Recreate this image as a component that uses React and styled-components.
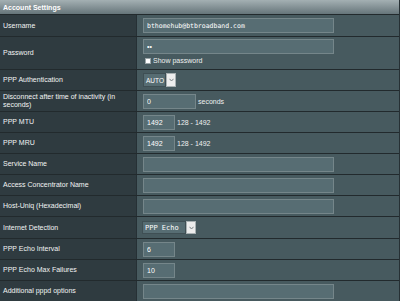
import React from 'react';
import styled, { createGlobalStyle } from 'styled-components';

const Global = createGlobalStyle`
  html, body { margin: 0; padding: 0; background: #475a5f; }
  body {
    width: 400px; height: 301px; overflow: hidden;
    font-family: "Liberation Sans", Arial, sans-serif;
  }
`;

const Table = styled.div`
  width: 399px;
  border-right: 1px solid #263034;
  background: #475a5f;
`;

const Header = styled.div`
  height: 14px;
  box-sizing: border-box;
  padding-left: 3px;
  display: flex;
  align-items: center;
  background: linear-gradient(#a4b0b3, #66757a);
  color: #fff;
  font-weight: bold;
  font-size: 7px;
`;

const Row = styled.div`
  display: grid;
  grid-template-columns: 137px 1fr;
  height: ${p => p.$h}px;
  box-sizing: border-box;
  border-top: 1px solid #222a2d;
`;

const Label = styled.div`
  background: #2f3b40;
  color: #f2f4f4;
  font-size: 7px;
  line-height: 8px;
  display: flex;
  align-items: center;
  padding: 0 12px 0 3px;
  border-right: 1px solid #263035;
`;

const Cell = styled.div`
  display: flex;
  flex-direction: ${p => (p.$stack ? 'column' : 'row')};
  align-items: ${p => (p.$stack ? 'flex-start' : 'center')};
  padding: ${p => (p.$stack ? '2px 0 0 6px' : '0 0 0 6px')};
  gap: ${p => (p.$stack ? '3px' : '2px')};
`;

const TextInput = styled.input`
  box-sizing: border-box;
  width: ${p => p.$w}px;
  height: 15px;
  margin: 0;
  padding: 0 0 0 3px;
  background: #576d73;
  border: 1px solid #75868a;
  color: #fff;
  outline: none;
  font-family: ${p => (p.$mono ? '"DejaVu Sans Mono", monospace' : '"Liberation Sans", Arial, sans-serif')};
  font-size: ${p => (p.$mono ? '6.5px' : '7px')};
`;

const Hint = styled.span`
  color: #eef0f0;
  font-size: 7px;
`;

const CheckLine = styled.label`
  display: flex;
  align-items: center;
  gap: 2px;
  color: #eef0f0;
  font-size: 7px;
  padding-left: 2px;
`;

const Check = styled.input`
  appearance: none;
  margin: 0;
  width: 6px;
  height: 6px;
  background: #fff;
  border: 1px solid #9aa5a8;
  box-sizing: border-box;
`;

const Select = styled.div`
  display: inline-flex;
  height: ${p => p.$h}px;
  margin-left: ${p => p.$ml || 0}px;
`;

const SelectValue = styled.div`
  box-sizing: border-box;
  width: ${p => p.$w}px;
  height: 100%;
  background: #576d73;
  border: 1px solid #3f4f54;
  color: #fff;
  display: flex;
  align-items: center;
  padding-left: 2px;
  font-family: ${p => (p.$mono ? '"DejaVu Sans Mono", monospace' : '"Liberation Sans", Arial, sans-serif')};
  font-size: ${p => (p.$mono ? '7px' : '6.5px')};
  white-space: pre;
  overflow: hidden;
`;

const SelectArrow = styled.div`
  box-sizing: border-box;
  width: 10px;
  height: 100%;
  background: #ededed;
  border: 1px solid #a9b1b3;
  display: flex;
  align-items: center;
  justify-content: center;
`;

const Chevron = () => (
  <svg width="5" height="4" viewBox="0 0 5 4">
    <polyline points="0.5,0.8 2.5,3 4.5,0.8" fill="none" stroke="#7a8285" strokeWidth="1" />
  </svg>
);

export default function App() {
  return (
    <>
      <Global />
      <Table>
        <Header>Account Settings</Header>
        <Row $h={22}>
          <Label>Username</Label>
          <Cell><TextInput $w={191} $mono defaultValue="bthomehub@btbroadband.com" /></Cell>
        </Row>
        <Row $h={33}>
          <Label>Password</Label>
          <Cell $stack>
            <TextInput $w={191} type="password" defaultValue="bt" />
            <CheckLine><Check type="checkbox" />Show password</CheckLine>
          </Cell>
        </Row>
        <Row $h={21}>
          <Label>PPP Authentication</Label>
          <Cell>
            <Select $h={14}>
              <SelectValue $w={23}>AUTO</SelectValue>
              <SelectArrow><Chevron /></SelectArrow>
            </Select>
          </Cell>
        </Row>
        <Row $h={21}>
          <Label>Disconnect after time of inactivity (in seconds)</Label>
          <Cell>
            <TextInput $w={53} defaultValue="0" />
            <Hint>seconds</Hint>
          </Cell>
        </Row>
        <Row $h={21}>
          <Label>PPP MTU</Label>
          <Cell>
            <TextInput $w={32} defaultValue="1492" />
            <Hint>128 - 1492</Hint>
          </Cell>
        </Row>
        <Row $h={21}>
          <Label>PPP MRU</Label>
          <Cell>
            <TextInput $w={32} defaultValue="1492" />
            <Hint>128 - 1492</Hint>
          </Cell>
        </Row>
        <Row $h={21}>
          <Label>Service Name</Label>
          <Cell><TextInput $w={191} /></Cell>
        </Row>
        <Row $h={21}>
          <Label>Access Concentrator Name</Label>
          <Cell><TextInput $w={191} /></Cell>
        </Row>
        <Row $h={21}>
          <Label>Host-Uniq (Hexadecimal)</Label>
          <Cell><TextInput $w={191} /></Cell>
        </Row>
        <Row $h={22}>
          <Label>Internet Detection</Label>
          <Cell>
            <Select $h={13} $ml={-1}>
              <SelectValue $w={44} $mono>PPP Echo</SelectValue>
              <SelectArrow><Chevron /></SelectArrow>
            </Select>
          </Cell>
        </Row>
        <Row $h={21}>
          <Label>PPP Echo Interval</Label>
          <Cell><TextInput $w={32} defaultValue="6" /></Cell>
        </Row>
        <Row $h={21}>
          <Label>PPP Echo Max Failures</Label>
          <Cell><TextInput $w={32} defaultValue="10" /></Cell>
        </Row>
        <Row $h={21}>
          <Label>Additional pppd options</Label>
          <Cell><TextInput $w={191} /></Cell>
        </Row>
      </Table>
    </>
  );
}
